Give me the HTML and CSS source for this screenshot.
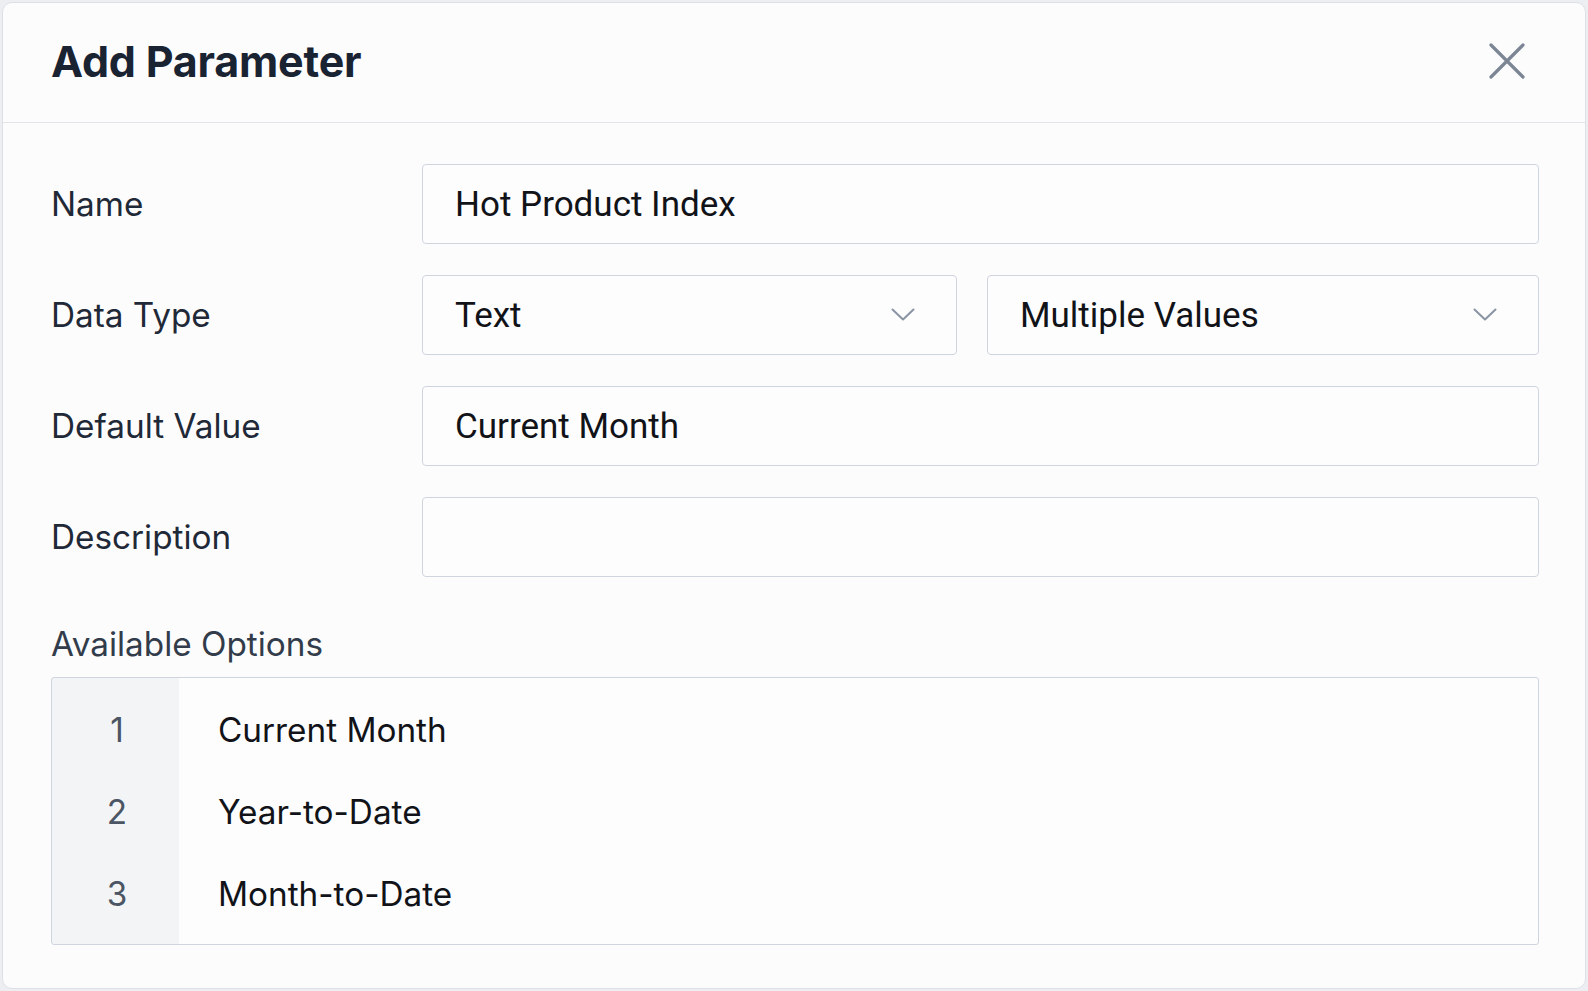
FILE: index.html
```html
<html>
    <head>
        <title>Add Parameter</title>
        <meta charset="UTF-8"><meta name="viewport"
            content="width=device-width, initial-scale=1.0">

        <link rel="stylesheet" href="styles.css">
</head><body>
        <div class="dialog">
            <header class="dialog-header">
                <h1 class="dialog-title">Add Parameter</h1>
                <span class="close">
                    <svg width="36" height="36" viewBox="0 0 36 36">
                        <path d="M2 2 L34 34 M34 2 L2 34" stroke="#7b8594" stroke-width="3.2" stroke-linecap="round" fill="none"/>
                    </svg>
                </span>
            </header>
            <main class="dialog-body">
                <div class="form-grid">
                    <label class="field-label">Name</label>
                    <div class="field">Hot Product Index</div>

                    <label class="field-label">Data Type</label>
                    <div class="select-pair">
                        <div class="field select">
                            <span>Text</span>
                            <svg class="chevron" width="24" height="14" viewBox="0 0 24 14">
                                <path d="M1.5 1.5 L12 11.5 L22.5 1.5" stroke="#8a94a3" stroke-width="2" stroke-linecap="round" stroke-linejoin="round" fill="none"/>
                            </svg>
                        </div>
                        <div class="field select">
                            <span>Multiple Values</span>
                            <svg class="chevron" width="24" height="14" viewBox="0 0 24 14">
                                <path d="M1.5 1.5 L12 11.5 L22.5 1.5" stroke="#8a94a3" stroke-width="2" stroke-linecap="round" stroke-linejoin="round" fill="none"/>
                            </svg>
                        </div>
                    </div>

                    <label class="field-label">Default Value</label>
                    <div class="field">Current Month</div>

                    <label class="field-label">Description</label>
                    <div class="field"></div>
                </div>

                <div class="options-label">Available Options</div>
                <ol class="options">
                    <li class="option-row"><span class="option-num">1</span><span class="option-text">Current Month</span></li>
                    <li class="option-row"><span class="option-num">2</span><span class="option-text">Year-to-Date</span></li>
                    <li class="option-row"><span class="option-num">3</span><span class="option-text">Month-to-Date</span></li>
                </ol>
            </main>
        </div>
    </body></html>
```

FILE: styles.css
```css
body {
    font-family: 'Inter', 'Liberation Sans', sans-serif;
    margin: 0;
    padding: 2px;
    background-color: #eceef2;
    color: #1f2937;
}
.dialog {
    background-color: #fcfcfd;
    border: 1px solid #dde1e7;
    border-radius: 10px;
    height: 987px;
    box-sizing: border-box;
    overflow: hidden;
}
.dialog-header {
    display: flex;
    justify-content: space-between;
    align-items: center;
    height: 120px;
    padding: 0 60px 3px 48px;
    box-sizing: border-box;
    border-bottom: 1px solid #e2e5ea;
}
.dialog-title {
    margin: 0;
    font-size: 43px;
    font-weight: 700;
    color: #1a2332;
    letter-spacing: -0.2px;
}
.close {
    display: flex;
    cursor: pointer;
}
.dialog-body {
    padding: 41px 46px 0 48px;
}
.form-grid {
    display: grid;
    grid-template-columns: 371px 1fr;
    grid-auto-rows: 80px;
    row-gap: 31px;
    align-items: center;
}
.field-label {
    font-size: 33.3px;
    color: #1f2937;
}
.field {
    height: 80px;
    box-sizing: border-box;
    border: 1.5px solid #cfd5de;
    border-radius: 4px;
    background-color: #fdfdfe;
    padding: 0 32px;
    display: flex;
    align-items: center;
    font-family: 'Roboto', 'Liberation Sans', sans-serif;
    font-size: 35px;
    color: #111318;
}
.select-pair {
    display: grid;
    grid-template-columns: 535fr 552fr;
    column-gap: 30px;
}
.select {
    justify-content: space-between;
    padding-right: 41px;
}
.options-label {
    margin-top: 47px;
    font-size: 33.3px;
    line-height: 40px;
    color: #333c4a;
}
.options {
    list-style: none;
    margin: 13px 0 0 0;
    padding: 11px 0 9px 0;
    border: 1.5px solid #cfd5de;
    border-radius: 3px;
    background: linear-gradient(to right, #f3f4f6 127px, #fdfdfe 127px);
}
.option-row {
    display: flex;
    align-items: center;
    height: 82px;
}
.option-num {
    width: 127px;
    padding-left: 3px;
    box-sizing: border-box;
    text-align: center;
    font-size: 33.3px;
    color: #4b5563;
}
.option-text {
    padding-left: 39px;
    font-size: 33.3px;
    color: #111318;
}
```
